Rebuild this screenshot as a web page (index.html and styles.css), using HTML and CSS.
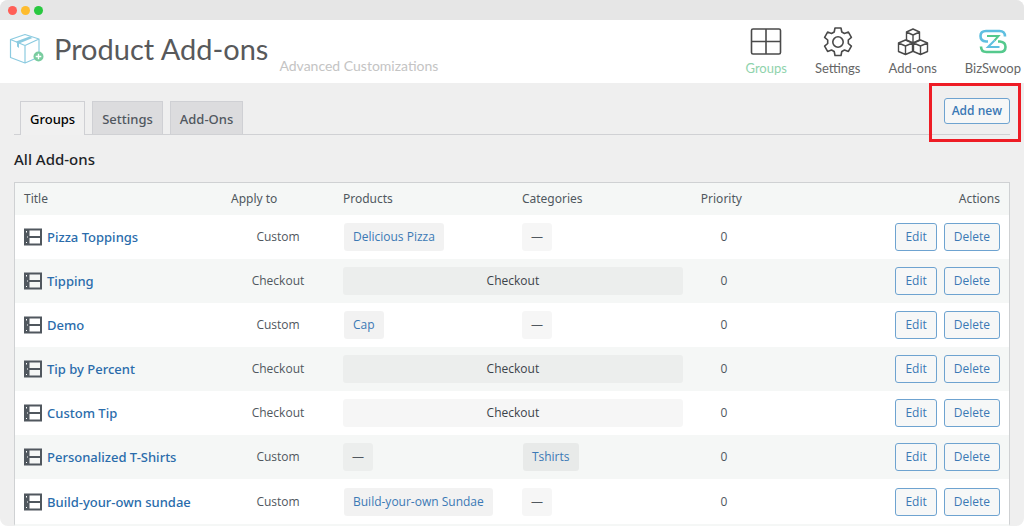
FILE: index.html
```
<!DOCTYPE html>
<html lang="en">
<head>
<meta charset="utf-8">
<meta name="viewport" content="width=device-width, initial-scale=1">
<title>Product Add-ons</title>
<link rel="stylesheet" href="styles.css">
</head>
<body>
<svg class="sprite" aria-hidden="true">
  <symbol id="group" viewBox="0 0 18 18">
    <path d="M1 1.500h16v15H1zM1 9h16" fill="none" stroke="#50575e" stroke-width="2"/>
    <path d="M1 1h4.500v16H1z" fill="#50575e"/>
    <path d="M2 3h1v1.500H2zM3 8.500h1v1H3zM2 14h1v1H2z" fill="#fff"/>
  </symbol>
</svg>
<div class="window">
  <div class="titlebar"><span class="dot red"></span><span class="dot yellow"></span><span class="dot green"></span></div>
  <header class="header">
    <svg class="logo" viewBox="0 0 36 32" aria-hidden="true">
      <g fill="none" stroke="#8ccbe0" stroke-width="1.200" stroke-linejoin="round">
        <path d="M16 1.500L30 6v18L16 30 1.500 24.500V6.500zM1.500 6.500l14.500 6L30 6M16 12.500V30"/>
      </g>
      <path d="M7 8.500L20.500 3.500 23.500 5 10 10.500v4.500l-2-1.500V10z" fill="#8ccbe0"/>
      <circle cx="29.500" cy="23.500" r="5" fill="#79cc9f"/>
      <path d="M26.700 23.500h5.600M29.500 20.700v5.600" stroke="#fff" stroke-width="1.400"/>
    </svg>
    <h1 class="brand">Product Add-ons</h1>
    <span class="tagline">Advanced Customizations</span>
    <nav class="nav">
      <a class="nav-item active" href="#">
        <svg viewBox="0 0 32 30" aria-hidden="true"><path d="M3 2h26q1.500 0 1.500 1.500v22q0 1.500-1.500 1.500H3q-1.500 0-1.500-1.500v-22Q1.500 2 3 2zM16 2v25M1.500 14.500h29" fill="none" stroke="#4a4a4a" stroke-width="1.600"/></svg>
        Groups</a>
      <a class="nav-item" href="#">
        <svg viewBox="0 0 32 30" aria-hidden="true"><g fill="none" stroke="#4a4a4a" stroke-width="1.600" stroke-linejoin="round"><path d="M13 1h6l.8 4 2.700 1.500 3.900-1.400 3 5.200-3.100 2.700v3.500l3.100 2.700-3 5.200-3.900-1.400-2.700 1.500-.8 4h-6l-.8-4-2.700-1.500-3.900 1.400-3-5.200 3.100-2.700V13L2.600 10.300l3-5.200 3.900 1.400L12.200 5z"/><circle cx="16" cy="15" r="5.200"/></g></svg>
        Settings</a>
      <a class="nav-item" href="#">
        <svg viewBox="0 0 32 30" aria-hidden="true"><g fill="none" stroke="#4a4a4a" stroke-width="1.400" stroke-linejoin="round"><path d="M16 2l6.500 3v8L16 16l-6.500-3V5zM9.500 5L16 8l6.500-3M16 8v8"/><path d="M8.500 13L15.500 16v8.500l-7 3-7-3V16zM1.500 16l7 3 7-3M8.500 19v8.500"/><path d="M23.500 13l7 3v8.500l-7 3-7-3V16zM16.500 16l7 3 7-3M23.500 19v8.500"/></g></svg>
        Add-ons</a>
      <a class="nav-item" href="#">
        <svg viewBox="0 0 32 30" aria-hidden="true"><g fill="none" stroke-width="2.600"><path d="M28 9.500Q28 4 22.500 4H9Q3.500 4 3.500 9t5.500 5.500h2" stroke="#5fbfe0"/><path d="M4 19.500Q4 25 9.500 25H23q5.500 0 5.500-5T23 14.500h-2" stroke="#55c98d"/><path d="M10 9h11.500l-4 4.500" stroke="#55c98d" stroke-width="2"/><path d="M17.500 13.500L11 20h11.500" stroke="#5fbfe0" stroke-width="2"/></g></svg>
        BizSwoop</a>
    </nav>
  </header>
  <main class="content">
    <div class="tabs">
      <a class="tab current" href="#">Groups</a>
      <a class="tab" href="#">Settings</a>
      <a class="tab" href="#">Add-Ons</a>
      <div class="add"><button class="button add-new" type="button">Add new</button><span class="highlight"></span></div>
    </div>
    <h2 class="heading">All Add-ons</h2>
    <table class="list">
      <thead><tr><th class="c-title">Title</th><th class="c-apply">Apply to</th><th class="c-set">Products</th><th class="c-set">Categories</th><th class="c-priority">Priority</th><th class="c-actions">Actions</th></tr></thead>
      <tbody>
        <tr><td><a class="title" href="#"><svg><use href="#group"/></svg>Pizza Toppings</a></td><td class="mid">Custom</td><td><a class="chip link" href="#">Delicious Pizza</a></td><td><span class="chip">—</span></td><td class="mid">0</td><td><div class="actions"><button class="button" type="button">Edit</button><button class="button" type="button">Delete</button></div></td></tr>
        <tr><td><a class="title" href="#"><svg><use href="#group"/></svg>Tipping</a></td><td class="mid">Checkout</td><td colspan="2"><span class="chip wide">Checkout</span></td><td class="mid">0</td><td><div class="actions"><button class="button" type="button">Edit</button><button class="button" type="button">Delete</button></div></td></tr>
        <tr><td><a class="title" href="#"><svg><use href="#group"/></svg>Demo</a></td><td class="mid">Custom</td><td><a class="chip link" href="#">Cap</a></td><td><span class="chip">—</span></td><td class="mid">0</td><td><div class="actions"><button class="button" type="button">Edit</button><button class="button" type="button">Delete</button></div></td></tr>
        <tr><td><a class="title" href="#"><svg><use href="#group"/></svg>Tip by Percent</a></td><td class="mid">Checkout</td><td colspan="2"><span class="chip wide">Checkout</span></td><td class="mid">0</td><td><div class="actions"><button class="button" type="button">Edit</button><button class="button" type="button">Delete</button></div></td></tr>
        <tr><td><a class="title" href="#"><svg><use href="#group"/></svg>Custom Tip</a></td><td class="mid">Checkout</td><td colspan="2"><span class="chip wide">Checkout</span></td><td class="mid">0</td><td><div class="actions"><button class="button" type="button">Edit</button><button class="button" type="button">Delete</button></div></td></tr>
        <tr><td><a class="title" href="#"><svg><use href="#group"/></svg>Personalized T-Shirts</a></td><td class="mid">Custom</td><td><span class="chip">—</span></td><td><a class="chip link" href="#">Tshirts</a></td><td class="mid">0</td><td><div class="actions"><button class="button" type="button">Edit</button><button class="button" type="button">Delete</button></div></td></tr>
        <tr><td><a class="title" href="#"><svg><use href="#group"/></svg>Build-your-own sundae</a></td><td class="mid">Custom</td><td><a class="chip link" href="#">Build-your-own Sundae</a></td><td><span class="chip">—</span></td><td class="mid">0</td><td><div class="actions"><button class="button" type="button">Edit</button><button class="button" type="button">Delete</button></div></td></tr>
      </tbody>
    </table>
  </main>
</div>
</body>
</html>
```
FILE: styles.css
```
* { box-sizing: border-box; }
body {
  margin: 0;
  background: #fff;
  font-family: "Open Sans", "Noto Sans", sans-serif;
  font-size: 12px;
  line-height: 18px;
  color: #50575e;
}
a { text-decoration: none; }
.sprite { display: none; }
.window {
  min-height: 100vh;
  background: #efefef;
  border-radius: 8px;
  overflow: hidden;
}
.titlebar {
  display: flex;
  align-items: center;
  gap: 4px;
  height: 20px;
  padding: 0 8px;
  background: #e6e6e6;
}
.dot { width: 9px; height: 9px; border-radius: 50%; }
.red { background: #ff5f57; }
.yellow { background: #febc2e; }
.green { background: #28c840; }

.header {
  display: flex;
  align-items: flex-start;
  height: 63px;
  padding: 0 3px 0 9px;
  background: #fff;
  font-family: Lato, sans-serif;
  color: #555;
}
.logo { width: 36px; height: 32px; margin-top: 13px; }
.brand {
  margin: 11px 11px 0 9px;
  font-size: 29px;
  line-height: 36px;
  font-weight: 400;
  color: #58595b;
}
.tagline { margin-top: 37px; font-size: 14px; color: #c4c4c4; }
.nav { display: flex; gap: 28px; margin-left: auto; }
.nav-item {
  display: flex;
  flex-direction: column;
  align-items: center;
  padding-top: 7px;
  gap: 2px;
  font-size: 13px;
  color: #666;
}
.nav-item svg { width: 32px; height: 30px; }
.nav-item.active { color: #8fd3ac; }

.content { padding: 15px 14px 0; }
.tabs {
  display: flex;
  align-items: flex-end;
  gap: 7px;
  padding: 3px 0 0 6px;
  border-bottom: 1px solid #d0d1d4;
}
.tab {
  padding: 8px 9px 6px;
  border: 1px solid #cfd0d4;
  border-bottom: 0;
  background: #dcdcde;
  font-family: "Noto Sans", sans-serif;
  font-size: 13px;
  font-weight: 500;
  color: #50575e;
}
.tab.current {
  margin-bottom: -1px;
  padding-bottom: 7px;
  background: #f0f0f0;
  color: #000;
}
.add { position: relative; align-self: flex-start; margin: -3px 0 0 auto; }
.button {
  height: 28px;
  padding: 0 9px;
  border: 1px solid #6ea3d0;
  border-radius: 3px;
  background: #f6f7f7;
  font: inherit;
  color: #3b79b5;
}
.add-new { display: block; height: 26px; padding: 0 7px; font-weight: 600; }
.highlight {
  position: absolute;
  inset: -15px -11px -18px -15px;
  border: 3px solid #ee1c25;
  pointer-events: none;
}
.heading {
  margin: 14px 0 13px;
  font-family: "Noto Sans", sans-serif;
  font-size: 15px;
  line-height: 20px;
  font-weight: 500;
  color: #1d2327;
}
.list {
  width: 100%;
  table-layout: fixed;
  border: 1px solid #cfd1d3;
  border-bottom: 2px solid #f5f7f6;
  border-spacing: 0;
  background: #fff;
}
th {
  height: 32px;
  padding: 0 9px;
  background: #f5f7f6;
  font-family: "Noto Sans", sans-serif;
  font-weight: 400;
  text-align: left;
}
td { height: 44px; padding: 0 9px; }
tbody tr:last-child td { height: 45px; }
tbody tr:nth-child(even) { background: #f5f7f6; }
.c-title { width: 207px; }
.c-apply { width: 112px; }
.c-set { width: 18%; }
.c-priority { width: 64px; }
.c-actions { text-align: right; }
.mid { text-align: center; }
.title {
  display: flex;
  align-items: center;
  gap: 5px;
  font-family: "Noto Sans", sans-serif;
  font-size: 13px;
  font-weight: 500;
  color: #2a6cab;
}
.title svg { width: 18px; height: 18px; }
.chip {
  display: inline-block;
  padding: 5px 9px;
  border-radius: 3px;
  background: rgba(0, 0, 0, 0.035);
  vertical-align: middle;
}
.chip.link { background: rgba(0, 0, 0, 0.05); color: #3b79b5; margin-left: 1px; }
.chip.wide { display: block; text-align: center; color: #3c434a; }
tr:nth-child(even) .chip.wide { background: #eceeed; }
.actions { display: flex; justify-content: flex-end; gap: 7px; }
```
